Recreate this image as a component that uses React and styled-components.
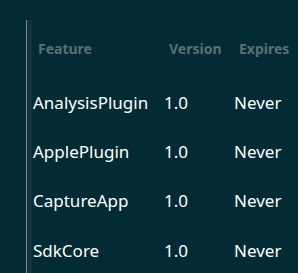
import React from 'react'
import styled, { createGlobalStyle } from 'styled-components'

const GlobalStyle = createGlobalStyle`
  html, body {
    margin: 0;
    padding: 0;
    background: #022b35;
  }
  body {
    font-family: "Noto Sans", "Open Sans", sans-serif;
  }
`

const columns = [
  { label: 'Feature', width: 131 },
  { label: 'Version', width: 70 },
  { label: 'Expires', width: 64 },
]

const features = [
  { name: 'AnalysisPlugin', version: '1.0', expires: 'Never' },
  { name: 'ApplePlugin', version: '1.0', expires: 'Never' },
  { name: 'CaptureApp', version: '1.0', expires: 'Never' },
  { name: 'SdkCore', version: '1.0', expires: 'Never' },
]

function App() {
  return (
    <Page>
      <GlobalStyle />
      <Panel>
        <Table>
          <thead>
            <tr>
              {columns.map((c) => (
                <Head key={c.label} $width={c.width}>{c.label}</Head>
              ))}
            </tr>
          </thead>
          <tbody>
            {features.map((f) => (
              <Row key={f.name}>
                <Cell>{f.name}</Cell>
                <Cell>{f.version}</Cell>
                <Cell>{f.expires}</Cell>
              </Row>
            ))}
          </tbody>
        </Table>
      </Panel>
    </Page>
  )
}

export default App

const Page = styled.div`
  width: 298px;
  height: 273px;
  box-sizing: border-box;
  padding: 20px 0 0 26px;
  background: #022b35;
  overflow: hidden;
`

const Panel = styled.div`
  height: 100%;
  border-left: 1px solid #7d8688;
  background: linear-gradient(to right, #12323d 0, #12323d 5px, transparent 5px);
`

const Table = styled.table`
  border-collapse: collapse;
  table-layout: fixed;
  margin-left: 2px;
`

const Head = styled.th`
  width: ${(p) => p.$width}px;
  text-align: left;
  vertical-align: top;
  font-size: 14px;
  line-height: 19px;
  font-weight: 700;
  color: #5c6e74;
  padding: 19px 0 0 9px;
  height: 57px;
  box-sizing: border-box;
  white-space: nowrap;
`

const Row = styled.tr`
  height: 49.3px;
`

const Cell = styled.td`
  font-size: 17px;
  color: #ffffff;
  padding: 1px 0 0 4px;
  white-space: nowrap;
  vertical-align: middle;
`
